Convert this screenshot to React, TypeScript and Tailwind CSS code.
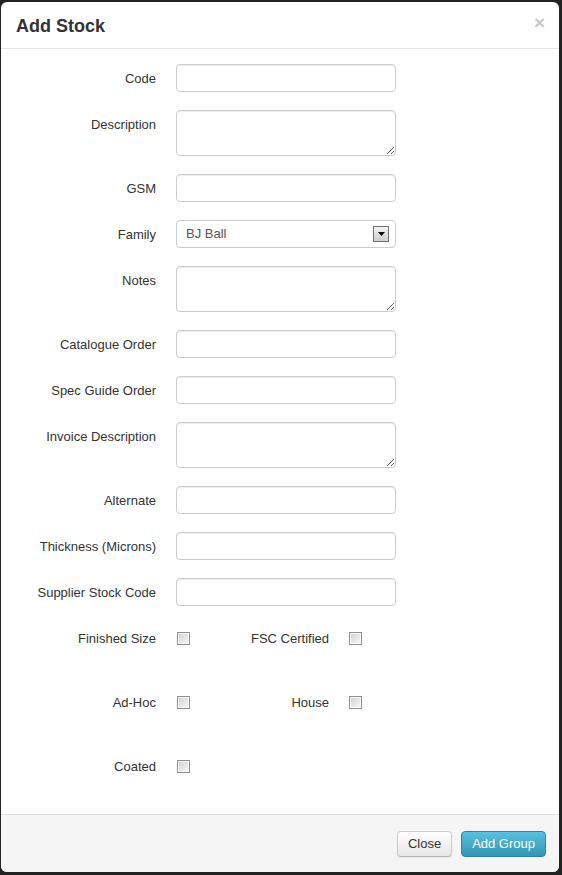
import React from "react";

const font = { fontFamily: '"Liberation Sans", Arial, sans-serif' };

function Label({ children, w = "w-[155px]" }: { children: React.ReactNode; w?: string }) {
  return (
    <div className={`${w} shrink-0 text-right pt-[5px] leading-[20px] text-[13px] text-[#333]`}>{children}</div>
  );
}

function TextRow({ label }: { label: string }) {
  return (
    <div className="flex mb-[18px]">
      <Label>{label}</Label>
      <input
        type="text"
        className="ml-[20px] w-[220px] h-[28px] border border-[#ccc] rounded-[4px] bg-white shadow-[inset_0_1px_1px_rgba(0,0,0,0.075)] outline-none px-[6px] text-[13px]"
      />
    </div>
  );
}

function AreaRow({ label }: { label: string }) {
  return (
    <div className="flex mb-[18px]">
      <Label>{label}</Label>
      <textarea className="ml-[20px] w-[220px] h-[46px] border border-[#ccc] rounded-[4px] bg-white shadow-[inset_0_1px_1px_rgba(0,0,0,0.075)] outline-none px-[6px] text-[13px] resize-y block" />
    </div>
  );
}

function Check({ ml }: { ml: string }) {
  return (
    <span className={`${ml} mt-[8px] w-[13px] h-[13px] shrink-0 border border-[#8f8f8f] bg-white p-[1px] block`}>
      <span className="block w-full h-full bg-gradient-to-br from-[#d4d4d4] to-[#f7f7f7]" />
    </span>
  );
}

function CheckRow({ a, b, last }: { a: string; b?: string; last?: boolean }) {
  return (
    <div className={`flex h-[46px] items-start ${last ? "" : "mb-[18px]"}`}>
      <Label>{a}</Label>
      <Check ml="ml-[21px]" />
      {b && (
        <>
          <Label w="w-[139px]">{b}</Label>
          <Check ml="ml-[20px]" />
        </>
      )}
    </div>
  );
}

export default function App() {
  return (
    <div style={font} className="w-[562px] h-[875px] bg-[#222] overflow-hidden pt-[2px] pl-[1px]">
      <div className="w-[558px] h-[870px] bg-white rounded-[6px] flex flex-col overflow-hidden">
        <div className="h-[47px] shrink-0 border-b border-[#e5e5e5] flex items-center justify-between pl-[15px] pr-[14px]">
          <h3 className="text-[18px] font-bold text-[#333] leading-[20px] mt-[1px]">Add Stock</h3>
          <span className="text-[#c8c8c8] font-bold text-[19px] leading-[20px] -mt-[5px]">×</span>
        </div>
        <div className="flex-1 min-h-0 pt-[15px]">
          <TextRow label="Code" />
          <AreaRow label="Description" />
          <TextRow label="GSM" />
          <div className="flex mb-[18px]">
            <Label>Family</Label>
            <div className="ml-[20px] w-[220px] h-[28px] border border-[#ccc] rounded-[4px] bg-white flex items-center justify-between pl-[9px] pr-[6px]">
              <span className="text-[13px] text-[#555]">BJ Ball</span>
              <span className="w-[16px] h-[16px] border border-[#707070] bg-gradient-to-b from-[#f4f4f4] to-[#cdcdcd] flex items-center justify-center">
                <svg width="7" height="4" viewBox="0 0 7 4">
                  <path d="M0 0H7L3.5 4Z" fill="#000" />
                </svg>
              </span>
            </div>
          </div>
          <AreaRow label="Notes" />
          <TextRow label="Catalogue Order" />
          <TextRow label="Spec Guide Order" />
          <AreaRow label="Invoice Description" />
          <TextRow label="Alternate" />
          <TextRow label="Thickness (Microns)" />
          <TextRow label="Supplier Stock Code" />
          <CheckRow a="Finished Size" b="FSC Certified" />
          <CheckRow a="Ad-Hoc" b="House" />
          <CheckRow a="Coated" last />
        </div>
        <div className="h-[58px] shrink-0 bg-[#f5f5f5] border-t border-[#ddd] flex items-center justify-end pr-[13px] gap-[9px]">
          <button className="h-[26px] px-[10px] text-[13px] text-[#333] rounded-[4px] border border-[#ccc] border-b-[#b3b3b3] bg-gradient-to-b from-white to-[#e6e6e6] shadow-[inset_0_1px_0_rgba(255,255,255,0.2),0_1px_2px_rgba(0,0,0,0.05)]">
            Close
          </button>
          <button className="h-[26px] px-[10px] text-[13px] text-white rounded-[4px] border border-[#2a85a0] bg-gradient-to-b from-[#5bc0de] to-[#2f96b4]">
            Add Group
          </button>
        </div>
      </div>
    </div>
  );
}
